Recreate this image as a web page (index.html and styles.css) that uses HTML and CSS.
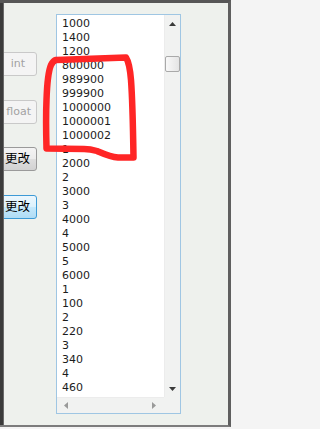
FILE: index.html
```html
<!DOCTYPE html>
<html lang="zh">
<head>
<meta charset="utf-8">
<title>ListBox</title>
<link rel="stylesheet" href="styles.css">
</head>
<body>
<div class="window">
  <div class="edge"></div>
  <div class="buttons">
    <button class="btn btn-disabled btn-int">int</button>
    <button class="btn btn-disabled btn-float">float</button>
    <button class="btn btn-change">更改</button>
    <button class="btn btn-change btn-focus">更改</button>
  </div>
  <div class="listbox">
    <ul class="items">
      <li>1000</li><li>1400</li><li>1200</li><li>800000</li><li>989900</li><li>999900</li>
      <li>1000000</li><li>1000001</li><li>1000002</li><li>1</li><li>2000</li><li>2</li>
      <li>3000</li><li>3</li><li>4000</li><li>4</li><li>5000</li><li>5</li><li>6000</li>
      <li>1</li><li>100</li><li>2</li><li>220</li><li>3</li><li>340</li><li>4</li><li>460</li>
    </ul>
    <div class="vscroll">
      <svg class="arrow" width="7" height="4" viewBox="0 0 7 4"><path d="M0 4 L3.5 0 L7 4 Z" fill="#3a3a3a"/></svg>
      <div class="thumb"></div>
      <div class="track"></div>
      <svg class="arrow" width="7" height="4" viewBox="0 0 7 4"><path d="M0 0 L3.5 4 L7 0 Z" fill="#3a3a3a"/></svg>
    </div>
    <div class="hscroll">
      <svg width="4" height="7" viewBox="0 0 4 7"><path d="M4 0 L0 3.5 L4 7 Z" fill="#9a9a9a"/></svg>
      <svg width="4" height="7" viewBox="0 0 4 7"><path d="M0 0 L4 3.5 L0 7 Z" fill="#9a9a9a"/></svg>
    </div>
    <div class="corner"></div>
  </div>
</div>
<svg class="mark" width="231" height="429" viewBox="0 0 231 429">
  <path d="M56 60 L126 57.5 C129 62 130 68 131 80 C132.5 100 133 125 133.5 157.5 L118 157.5 C110 157 104 154 97 151 C92 149.5 88 149 84 149 L46.5 148.5 C46 130 46 112 46.5 100 C47 85 48 72 51 65 C52.5 62 54 60.5 56 60 Z" fill="none" stroke="#ff2626" stroke-width="6.5" stroke-linejoin="round" stroke-linecap="round"/>
</svg>
</body>
</html>
```

FILE: styles.css
```css
* { box-sizing: border-box; }

html, body {
  margin: 0;
  padding: 0;
}

body {
  width: 231px;
  height: 429px;
  background: #f4f4f4;
  position: relative;
  overflow: hidden;
  font-family: "DejaVu Sans", "Noto Sans CJK SC", sans-serif;
}

.window {
  width: 231px;
  height: 427px;
  display: flex;
  background: #eef1ed;
  border-top: 3px solid #575757;
  border-right: 3px solid #5f5f5f;
  border-bottom: 2px solid #7c7c7c;
}

.edge {
  width: 4px;
  flex: none;
  background: #3b3b3b;
  border-right: 1px solid #6a6a6a;
}

.buttons {
  width: 34px;
  flex: none;
  overflow: hidden;
  display: flex;
  flex-direction: column;
  align-items: flex-end;
  gap: 23.5px;
  padding-top: 49px;
}

.btn {
  flex: none;
  width: 40px;
  height: 24px;
  margin: 0 1px 0 0;
  padding: 0;
  font-family: "DejaVu Sans", "Noto Sans CJK SC", sans-serif;
  font-size: 11px;
  line-height: 22px;
  text-align: right;
  color: #000;
  border: 1px solid #9a9a9a;
  border-radius: 3px;
  background: linear-gradient(#f4f4f4, #ececec 48%, #dedede 52%, #d2d2d2);
}

.btn-disabled {
  color: #a2a2a2;
  border-color: #c9c9c9;
  background: #f4f4f4;
}

.btn-int {
  padding-right: 11px;
}

.btn-float {
  padding-right: 5px;
}

.btn-change {
  font-size: 12.5px;
  padding-right: 6px;
}

.btn-focus {
  border-color: #3c9ad6;
  background: linear-gradient(#ecf7fd, #dcf1fc 48%, #c4e8fb 52%, #b0dcf5);
}

.listbox {
  flex: none;
  margin: 11px 0 0 18px;
  width: 125px;
  height: 400px;
  border: 1px solid #9fc6e3;
  background: #fff;
  display: grid;
  grid-template-columns: 107px 16px;
  grid-template-rows: 382px 16px;
}

.items {
  margin: 0;
  padding: 2px 0 0 5px;
  list-style: none;
  overflow: hidden;
  background: #fff;
  font-size: 11px;
  line-height: 14px;
  color: #1c1c1c;
}

.vscroll {
  background: #f1f2f1;
  border-left: 1px solid #ececec;
  display: flex;
  flex-direction: column;
  align-items: center;
  padding: 7px 0 0 0;
}

.vscroll .arrow {
  flex: none;
}

.thumb {
  flex: none;
  width: 15px;
  height: 16px;
  margin-top: 30px;
  border: 1px solid #a9a9a9;
  border-radius: 2px;
  background: linear-gradient(90deg, #f8f8f8, #e4e4e4);
}

.track {
  flex: 1;
}

.vscroll .arrow:last-child {
  margin-bottom: 6px;
}

.hscroll {
  background: #f1f2f1;
  border-top: 1px solid #ececec;
  display: flex;
  align-items: center;
  justify-content: space-between;
  padding: 0 8px 0 7px;
}

.corner {
  background: #f1f2f1;
}

.mark {
  position: absolute;
  left: 0;
  top: 0;
  pointer-events: none;
}
```
